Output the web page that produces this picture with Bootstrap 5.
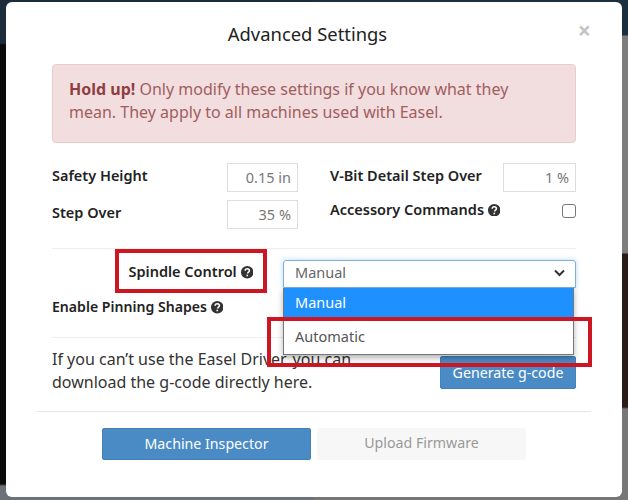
<!DOCTYPE html>
<html lang="en">
<head>
<meta charset="utf-8">
<title>Advanced Settings</title>
<link href="https://cdn.jsdelivr.net/npm/bootstrap@5.3.0/dist/css/bootstrap.min.css" rel="stylesheet">
<style>
html,body{height:500px;overflow:hidden}
body{background:
 linear-gradient(#1c2f3e 0,#1c2f3e 35px,#7d7d7d 36px,#7d7d7d 253px,#2a1d18 254px,#2a1d18 407px,#777 409px,#777 100%) right top/50% 100% no-repeat,
 linear-gradient(#1c2c3a 0,#1c2c3a 43px,#0a0a0a 45px,#0a0a0a 484px,#6c7278 486px,#6c7278 100%) left top/50% 100% no-repeat;
 font-family:"Noto Sans",sans-serif;font-size:15px;color:#333}
.sheet{position:relative;width:616px;height:495px;margin:2px 6px 0;background:#fff;border-radius:6px;padding:0 46px}
.sheet-title{height:62px;padding:18px 13px 0 0;text-align:center;font-size:18.4px;line-height:28px;color:#222}
.sheet-close{position:absolute;right:31px;top:18px;font-size:23px;font-weight:700;line-height:21px;color:#c4c4c4}
.warn{height:79px;background:#f2dede;border:1px solid #ebcccc;border-radius:4px;padding:13px 16px;font-size:16px;line-height:23px;color:#a15d62;margin-bottom:16px}
.warn b{color:#8f3f44}
.setrow{height:37px}
.up{padding-bottom:7px}
.lbl{font-weight:600;color:#222;font-size:14.5px;white-space:nowrap;padding-bottom:3px}
.numbox{height:29px;border:1px solid #ddd;text-align:right;padding:0 6px;line-height:27px;color:#777;font-size:14.5px}
.w1{width:71px}.w2{width:73px}
.leftcol{width:246px}.gapcol{width:32px}.rightcol{width:246px}
.tick{width:14px;height:14px;border:1px solid #777;border-radius:3px}
.qm{display:inline-block;width:12.5px;height:12.5px;vertical-align:-1.5px}
.rule{border-top:1px solid #eee;height:0}
.rule-a{margin-top:15px}
.rule-b{margin-top:14px}
.pickrow{margin-top:11px;height:29px}
.spin{width:231px;padding-right:30px;height:29px;line-height:23px}
.pick{height:28px;width:293px;border:1px solid #7fb0d6;border-radius:3px 3px 0 0;box-shadow:0 0 5px rgba(102,175,233,.5);padding:0 10px 2px 11px;color:#666;font-size:14.5px}
.pick svg{width:11px;height:8px}
.pin{height:30px;line-height:28px;margin-top:4px;font-size:14.1px}
.menu-list{position:absolute;left:277px;top:286px;width:291px;background:#fff;border:1px solid #777;border-top:0;box-shadow:0 3px 6px rgba(0,0,0,.3);z-index:3;font-size:14.5px}
.menu-list div{height:36px;padding:0 11px;line-height:36px;color:#555}
.menu-list .on{height:30px;background:#1e90ff;color:#fff;line-height:29px}
.mark-a,.mark-b{position:absolute;border:4px solid #cc1622;z-index:4}
.mark-a{left:109px;top:247px;width:152px;height:44px}
.mark-b{left:261px;top:315px;width:325px;height:50px}
.blue{background:#4a8bc5;border:1px solid #4280b8;border-radius:2px;color:#fff;text-align:center}
.gen{width:136px;height:33px;line-height:31px;font-size:14.2px;margin-top:8px}
.dlrow{margin-top:10px;height:63px}
.dl{font-size:16px;line-height:23px;color:#333}
.foot-rule{border-top:1px solid #e5e5e5;margin:0 -15px}
.foot-row{margin-top:16px;gap:6px}
.foot-btn{height:32px;line-height:30px;font-size:14.2px;text-align:center;width:209px}
.b2{background:#f7f7f7;color:#999;border-radius:2px}
</style>
</head>
<body>
<div class="sheet">
  <div class="sheet-title">Advanced Settings</div>
  <div class="sheet-close">×</div>
  <div class="warn"><b>Hold up!</b> Only modify these settings if you know what they<br>mean. They apply to all machines used with Easel.</div>

  <div class="d-flex">
    <div class="leftcol">
      <div class="setrow d-flex justify-content-between align-items-center"><span class="lbl">Safety Height</span><span class="numbox w1">0.15 in</span></div>
      <div class="setrow d-flex justify-content-between align-items-center"><span class="lbl">Step Over</span><span class="numbox w1">35 %</span></div>
    </div>
    <div class="gapcol"></div>
    <div class="rightcol">
      <div class="setrow d-flex justify-content-between align-items-center"><span class="lbl">V-Bit Detail Step Over</span><span class="numbox w2">1 %</span></div>
      <div class="setrow up d-flex justify-content-between align-items-center"><span class="lbl">Accessory Commands <svg class="qm" viewBox="0 0 14 14"><circle cx="7" cy="7" r="7" fill="#333"/><path d="M4.6 5.4c.1-1.5 1.1-2.2 2.4-2.2 1.4 0 2.4.8 2.4 2 0 1.7-2 1.600-2 3.100" fill="none" stroke="#fff" stroke-width="1.700"/><rect x="6.100" y="9.700" width="1.800" height="1.800" fill="#fff"/></svg></span><span class="tick"></span></div>
    </div>
  </div>

  <div class="rule rule-a"></div>

  <div class="pickrow d-flex align-items-start">
    <div class="lbl spin text-end">Spindle Control <svg class="qm" viewBox="0 0 14 14"><circle cx="7" cy="7" r="7" fill="#333"/><path d="M4.6 5.4c.1-1.5 1.1-2.2 2.4-2.2 1.4 0 2.4.8 2.4 2 0 1.7-2 1.600-2 3.100" fill="none" stroke="#fff" stroke-width="1.700"/><rect x="6.100" y="9.700" width="1.800" height="1.800" fill="#fff"/></svg></div>
    <div class="pick d-flex justify-content-between align-items-center"><span>Manual</span><svg viewBox="0 0 11 8"><path d="M1 1.500l4.500 4.500 4.500-4.500" fill="none" stroke="#333" stroke-width="2"/></svg></div>
  </div>
  <div class="lbl pin">Enable Pinning Shapes <svg class="qm" viewBox="0 0 14 14"><circle cx="7" cy="7" r="7" fill="#333"/><path d="M4.6 5.4c.1-1.5 1.1-2.2 2.4-2.2 1.4 0 2.4.8 2.4 2 0 1.7-2 1.600-2 3.100" fill="none" stroke="#fff" stroke-width="1.700"/><rect x="6.100" y="9.700" width="1.800" height="1.800" fill="#fff"/></svg></div>

  <div class="rule rule-b"></div>

  <div class="dlrow d-flex justify-content-between align-items-start">
    <div class="dl">If you can’t use the Easel Driver, you can<br>download the g-code directly here.</div>
    <div class="blue gen flex-shrink-0">Generate g-code</div>
  </div>

  <div class="foot-rule"></div>
  <div class="foot-row d-flex justify-content-center">
    <div class="blue foot-btn">Machine Inspector</div>
    <div class="foot-btn b2">Upload Firmware</div>
  </div>

  <div class="menu-list"><div class="on">Manual</div><div>Automatic</div></div>
  <div class="mark-a"></div>
  <div class="mark-b"></div>
</div>
</body>
</html>
